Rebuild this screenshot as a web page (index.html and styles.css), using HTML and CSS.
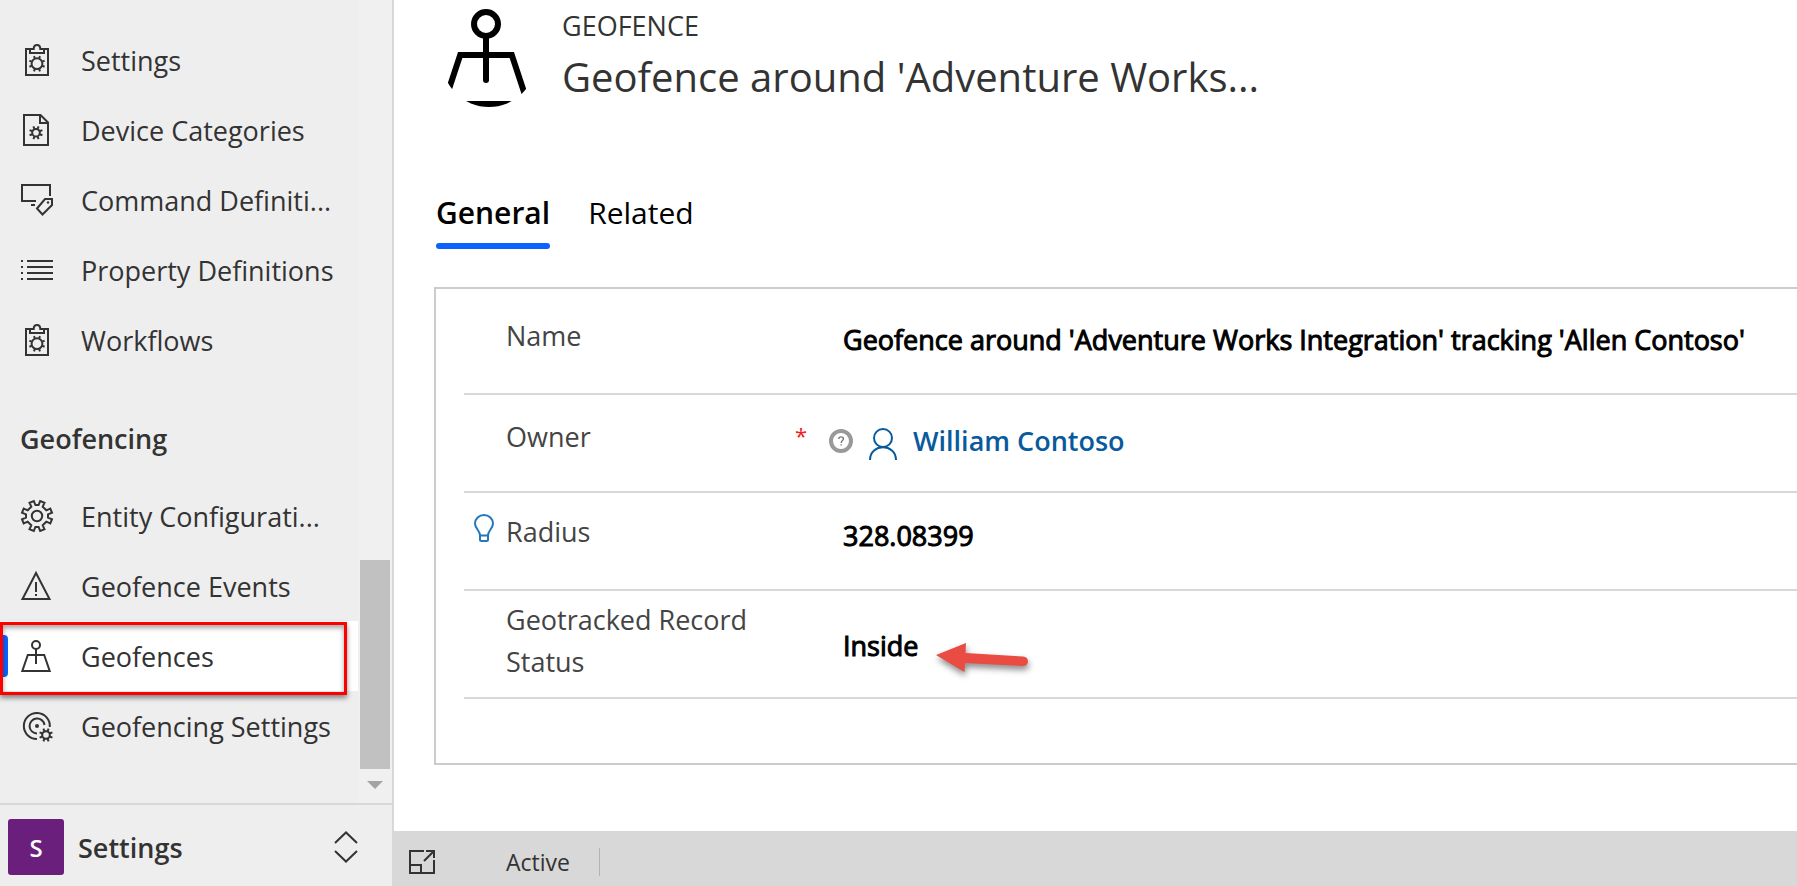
FILE: index.html
```html
<!DOCTYPE html>
<html lang="en">
<head>
<meta charset="utf-8">
<title>Geofence</title>
<link rel="stylesheet" href="styles.css">
</head>
<body>
<svg class="defs" aria-hidden="true">
  <symbol id="cog" viewBox="-10 -10 20 20">
    <circle r="5.4"/>
    <path d="M2.1 -5.1L3 -7.6M5.1 -2.1L7.6 -3M5.1 2.1L7.6 3M2.1 5.1L3 7.6M-2.1 5.1L-3 7.6M-5.1 2.1L-7.6 3M-5.1 -2.1L-7.6 -3M-2.1 -5.1L-3 -7.6"/>
  </symbol>
  <symbol id="cog-small" viewBox="-8 -8 16 16">
    <circle r="3.8"/>
    <path d="M1.500 -3.600L2.600 -6.400M3.600 -1.500L6.400 -2.600M3.600 1.500L6.400 2.600M1.500 3.600L2.600 6.400M-1.500 3.600L-2.600 6.400M-3.600 1.500L-6.400 2.600M-3.600 -1.500L-6.400 -2.600M-1.500 -3.600L-2.600 -6.400"/>
  </symbol>
  <symbol id="clipboard" viewBox="0 0 32 32">
    <path d="M9 5H5V31H27V5H23"/>
    <path d="M9 4.500V9H23V5H19.300C19.300 2.500 18 1 16 1S12.700 2.500 12.700 5H8"/>
    <use href="#cog" x="6" y="9.700" width="20" height="20"/>
  </symbol>
</svg>
<div class="app">
  <aside class="sidebar">
    <div class="scroller">
      <nav class="nav">
        <a class="item" href="#"><svg class="icon" viewBox="0 0 32 32"><use href="#clipboard"/></svg>Settings</a>
        <a class="item" href="#"><svg class="icon" viewBox="0 0 32 32"><path d="M3 1H19.500L27 8.500V31H3ZM19 1V9H27"/><use href="#cog-small" x="7" y="10.700" width="16" height="16"/></svg>Device Categories</a>
        <a class="item" href="#"><svg class="icon" viewBox="0 0 32 32"><path d="M15 17H1V1H29V12M10 21H14M16 24.500L24 15H31V21L21.500 30.500Z"/><circle class="fill" cx="27" cy="18.500" r="1.200"/></svg>Command Definiti...</a>
        <a class="item" href="#"><svg class="icon" viewBox="0 0 32 32"><path d="M0 7H2M0 13H2M0 19H2M0 25H2M6 7H32M6 13H32M6 19H32M6 25H32"/></svg>Property Definitions</a>
        <a class="item" href="#"><svg class="icon" viewBox="0 0 32 32"><use href="#clipboard"/></svg>Workflows</a>
        <h2 class="group">Geofencing</h2>
        <a class="item" href="#"><svg class="icon" viewBox="0 0 32 32"><circle cx="16" cy="16" r="5.200"/><path d="M14.400 5L12.800 1L8.500 2.700L10.300 6.700L6.700 10.300L2.700 8.500L1 12.800L5 14.400V17.600L1 19.200L2.700 23.500L6.700 21.700L10.300 25.300L8.500 29.300L12.800 31L14.400 27H17.600L19.200 31L23.500 29.300L21.700 25.300L25.300 21.700L29.300 23.500L31 19.200L27 17.600V14.400L31 12.800L29.300 8.500L25.300 10.300L21.700 6.700L23.500 2.700L19.200 1L17.600 5Z"/></svg>Entity Configurati...</a>
        <a class="item" href="#"><svg class="icon" viewBox="0 0 32 32"><path d="M15 3L28.500 29H1.500ZM15 12V22M15 24V26"/></svg>Geofence Events</a>
        <a class="item current" href="#" aria-current="page"><svg class="icon" viewBox="0 0 32 32"><circle cx="15" cy="5" r="4"/><path d="M15 9V24M6.800 15H23.200L28.700 31H1.300Z"/></svg>Geofences</a>
        <a class="item" href="#"><svg class="icon" viewBox="0 0 32 32"><path d="M28.800 17A13 13 0 1 0 16 29M23.500 15A7.500 7.500 0 1 0 16 23.500"/><circle class="fill" cx="16" cy="16" r="2"/><use href="#cog-small" x="17" y="17" width="16" height="16"/></svg>Geofencing Settings</a>
      </nav>
      <div class="track" aria-hidden="true">
        <div class="thumb"></div>
        <svg class="down" viewBox="0 0 16 8"><path d="M0 0H16L8 8Z"/></svg>
      </div>
    </div>
    <button class="area" type="button">
      <span class="tile">S</span>
      <span class="area-name">Settings</span>
      <svg class="updown" viewBox="0 0 24 32"><path d="M1 12L12 1.500L23 12M1 20L12 30.500L23 20"/></svg>
    </button>
  </aside>
  <main class="main">
    <header class="header">
      <svg class="entity" viewBox="444 0 84 108">
        <clipPath id="round"><circle cx="489" cy="60" r="47"/></clipPath>
        <circle cx="486" cy="24" r="12"/>
        <path d="M486 37V80" stroke-linecap="round"/>
        <path d="M460.200 55H511.800L528 104H444Z" clip-path="url(#round)"/>
      </svg>
      <div>
        <div class="kind">GEOFENCE</div>
        <h1 class="title">Geofence around 'Adventure Works...</h1>
      </div>
    </header>
    <div class="tabs" role="tablist">
      <button class="tab active" type="button" role="tab" aria-selected="true">General</button>
      <button class="tab" type="button" role="tab" aria-selected="false">Related</button>
    </div>
    <form class="card">
      <div class="row row-name">
        <span></span>
        <label for="name">Name</label>
        <span></span>
        <input class="value" id="name" value="Geofence around 'Adventure Works Integration' tracking 'Allen Contoso'">
      </div>
      <div class="row row-owner">
        <span></span>
        <span class="label">Owner</span>
        <span class="required">*</span>
        <div class="value owner">
          <svg class="help" viewBox="0 0 24 24"><circle cx="12" cy="12" r="10"/><path d="M9.800 10C9.800 7.200 14.400 7.200 14.400 10C14.400 11.600 12.200 11.600 12.200 14M12.200 15.200V16.600"/></svg>
          <svg class="person" viewBox="0 0 28 32"><circle cx="14" cy="10" r="9"/><path d="M1 32C1 15 27 15 27 32"/></svg>
          <a href="#">William Contoso</a>
        </div>
      </div>
      <div class="row">
        <svg class="bulb" viewBox="0 0 20 28"><path d="M6 21.500C6 16.500 1 14.500 1 9.500A9 8.500 0 0 1 19 9.500C19 14.500 14 16.500 14 21.500ZM6 21.500V25.500Q6 27 7.500 27H12.500Q14 27 14 25.500V21.500"/></svg>
        <label for="radius">Radius</label>
        <span></span>
        <input class="value" id="radius" value="328.08399">
      </div>
      <div class="row row-status">
        <span></span>
        <label for="status">Geotracked Record Status</label>
        <span></span>
        <div class="value status">
          <select id="status"><option>Inside</option></select>
          <svg class="arrow" viewBox="0 0 100 40"><path d="M2 15L32 3L31.500 13L89 16.500Q94 17 94 21.500Q93.500 26 88.500 26L31 23L30.500 32Z"/></svg>
        </div>
      </div>
    </form>
    <footer class="footer">
      <button class="expand" type="button" aria-label="Expand"><svg viewBox="0 0 26 24"><path d="M15 1H1V23H25V10M1 15H12V23M17 1H25V8M25 1L15 11"/></svg></button>
      <span class="state">Active</span>
    </footer>
  </main>
</div>
</body>
</html>
```

FILE: styles.css
```css
* { box-sizing: border-box; }
body {
  margin: 0;
  font-family: "Open Sans", "Noto Sans", sans-serif;
  font-size: 27px;
  color: #333;
  background: #fff;
}
button, input, select { font: inherit; color: inherit; background: none; border: 0; padding: 0; margin: 0; }
a { color: inherit; text-decoration: none; }
h1, h2 { margin: 0; font-weight: 400; }
svg { display: block; fill: none; stroke: #333; stroke-width: 2; flex: none; }
.fill { fill: #333; stroke: none; }
.defs { position: absolute; width: 0; height: 0; }

.app { display: flex; height: 100vh; overflow: hidden; }

/* Sidebar */
.sidebar {
  flex: none;
  width: 394px;
  display: flex;
  flex-direction: column;
  background: #eee;
  border-right: 2px solid #d8d8d8;
}
.scroller { flex: 1; min-height: 0; display: flex; }
.nav { flex: 1; padding-top: 25px; min-width: 0; }
.item {
  position: relative;
  display: flex;
  align-items: center;
  gap: 28px;
  height: 70px;
  padding-left: 21px;
  white-space: nowrap;
}
.icon { width: 32px; height: 32px; overflow: visible; }
.group { font-size: 27px; font-weight: 600; line-height: 80px; padding: 24px 0 0 20px; height: 106px; }
.current { background: #fff; }
.current::before {
  content: "";
  position: absolute;
  left: 0;
  top: 14px;
  width: 8px;
  height: 42px;
  background: #0b62ff;
  border-radius: 0 4px 4px 0;
}
.current::after {
  content: "";
  position: absolute;
  inset: 1px 11px -4px 0;
  border: 3px solid #f00;
  box-shadow: 0 3px 5px rgba(0, 0, 0, .45), inset 0 3px 5px rgba(0, 0, 0, .35);
  z-index: 1;
}
.track {
  width: 34px;
  background: #f0f0f0;
  display: flex;
  flex-direction: column;
  justify-content: flex-end;
  align-items: center;
  padding-bottom: 14px;
  gap: 12px;
}
.thumb { width: 30px; height: 209px; background: #c1c1c1; }
.down { width: 16px; height: 8px; fill: #a3a3a3; stroke: none; }
.area {
  display: flex;
  align-items: center;
  height: 83px;
  border-top: 2px solid #d8d8d8;
  padding: 3px 34px 0 8px;
  text-align: left;
}
.tile {
  width: 56px;
  height: 56px;
  margin-right: 14px;
  border-radius: 3px;
  background: #6b1f7c;
  color: #fff;
  font-size: 24px;
  font-weight: 600;
  line-height: 58px;
  text-align: center;
}
.area-name { flex: 1; font-weight: 600; }
.updown { width: 24px; height: 32px; }

/* Record */
.main { flex: 1; min-width: 0; display: flex; flex-direction: column; }
.header { display: flex; gap: 34px; padding-left: 50px; height: 108px; }
.entity { width: 84px; height: 108px; stroke: #000; stroke-width: 6; }
.kind { font-size: 27px; line-height: 52px; }
.title { font-size: 40px; line-height: 50px; white-space: nowrap; }
.tabs { display: flex; gap: 38px; padding: 81px 0 0 42px; color: #000; }
.tab { font-size: 30px; line-height: 48px; padding-bottom: 12px; position: relative; }
.active { font-weight: 600; }
.active::after {
  content: "";
  position: absolute;
  inset: auto 0 0 0;
  height: 6px;
  border-radius: 3px;
  background: #0b62ff;
}
.card {
  margin: 38px 0 66px 40px;
  padding: 0 0 64px 28px;
  border: 2px solid #ccc;
  border-right: 0;
}
.row {
  display: grid;
  grid-template-columns: 42px 289px 48px 1fr;
  align-items: start;
  height: 98px;
  padding-top: 18px;
  border-bottom: 2px solid #d8d8d8;
  line-height: 42px;
  color: #444;
}
.row-name { height: 106px; padding-top: 26px; }
.row-owner { grid-template-columns: 42px 289px 34px 1fr; padding-top: 21px; }
.row-status { height: 108px; padding-top: 8px; }
.value { min-width: 0; height: 42px; margin-top: 4px; color: #000; -webkit-text-stroke: 1px currentColor; }
.required { color: #f02020; font-size: 22px; line-height: 38px; }
.owner { display: flex; align-items: center; gap: 16px; font-weight: 600; color: #085a9d; -webkit-text-stroke: 0; }
.help { width: 24px; height: 24px; stroke: #999; stroke-width: 4; }
.help path { stroke: #777; stroke-width: 1.4; }
.person { width: 28px; height: 32px; margin-top: 6px; stroke: #085a9d; }
.bulb { width: 20px; height: 28px; margin: 3px 0 0 10px; stroke: #2277bd; }
.status { display: flex; align-items: flex-start; gap: 15px; margin-top: 26px; }
.status select { appearance: none; height: 42px; }
.arrow { width: 100px; height: 40px; margin-top: 15px; fill: #ea4b43; stroke: none; overflow: visible; filter: drop-shadow(1px 4px 3px rgba(0, 0, 0, .45)); }
.footer {
  flex: 1;
  display: flex;
  align-items: center;
  padding: 7px 0 0 15px;
  background: #d8d8d8;
}
.expand { width: 97px; }
.expand svg { width: 26px; height: 24px; }
.state { font-size: 23px; line-height: 28px; padding-right: 29px; border-right: 1px solid #b4b4b4; }
```
